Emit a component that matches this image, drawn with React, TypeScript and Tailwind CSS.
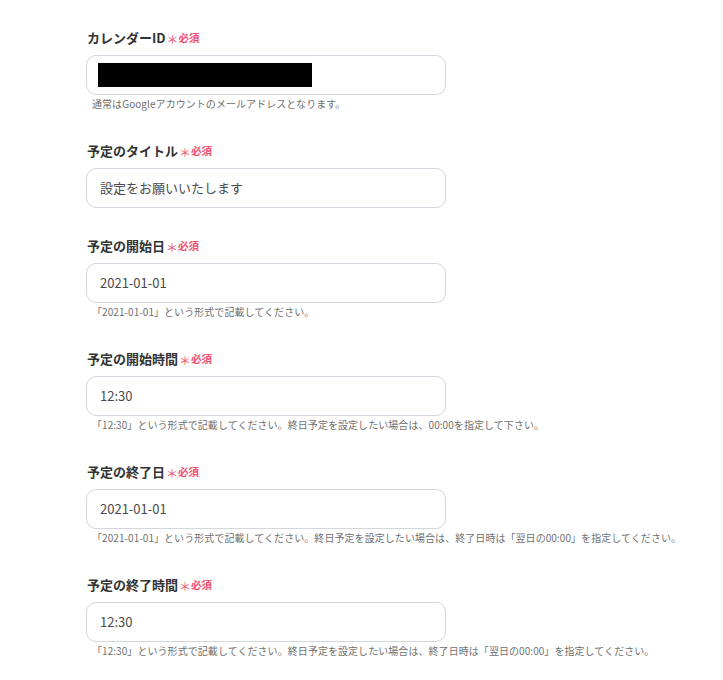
const fields: { label: string; value: string; help?: string; masked?: boolean }[] = [
  {
    label: "カレンダーID",
    value: "",
    masked: true,
    help: "通常はGoogleアカウントのメールアドレスとなります。",
  },
  { label: "予定のタイトル", value: "設定をお願いいたします" },
  {
    label: "予定の開始日",
    value: "2021-01-01",
    help: "「2021-01-01」という形式で記載してください。",
  },
  {
    label: "予定の開始時間",
    value: "12:30",
    help: "「12:30」という形式で記載してください。終日予定を設定したい場合は、00:00を指定して下さい。",
  },
  {
    label: "予定の終了日",
    value: "2021-01-01",
    help: "「2021-01-01」という形式で記載してください。終日予定を設定したい場合は、終了日時は「翌日の00:00」を指定してください。",
  },
  {
    label: "予定の終了時間",
    value: "12:30",
    help: "「12:30」という形式で記載してください。終日予定を設定したい場合は、終了日時は「翌日の00:00」を指定してください。",
  },
];

function Field({ label, value, help, masked }: (typeof fields)[number]) {
  return (
    <div className="mb-[28px]">
      <div className="flex items-center h-[20px] mb-[7px] pl-px">
        <span className="text-[13px] font-bold text-[#333333] leading-[20px]">{label}</span>
        <span className="ml-[1px] text-[12px] text-[#f0506e] leading-[20px] translate-y-[2px]">＊</span>
        <span className="text-[10.5px] font-bold text-[#f0506e] leading-[20px]">必須</span>
      </div>
      <div className="w-[360px] h-[40px] rounded-[10px] border border-[#d3d6dd] bg-white flex items-center pl-[13px]">
        {masked ? (
          <div className="w-[214px] h-[24px] bg-black -ml-[2px]" />
        ) : (
          <span className="text-[13px] text-[#4a4a4a]">{value}</span>
        )}
      </div>
      {help && (
        <p className="pt-px pb-px leading-[16px] text-[10px] text-[#707070] pl-[6px] tracking-[0.06px] whitespace-nowrap">
          {help}
        </p>
      )}
    </div>
  );
}

export default function App() {
  return (
    <div
      className="w-[723px] h-[680px] bg-white pt-[28px] pl-[86px] overflow-hidden"
      style={{ fontFamily: '"Noto Sans CJK JP", "Noto Sans", sans-serif' }}
    >
      {fields.map((f) => (
        <Field key={f.label} {...f} />
      ))}
    </div>
  );
}
